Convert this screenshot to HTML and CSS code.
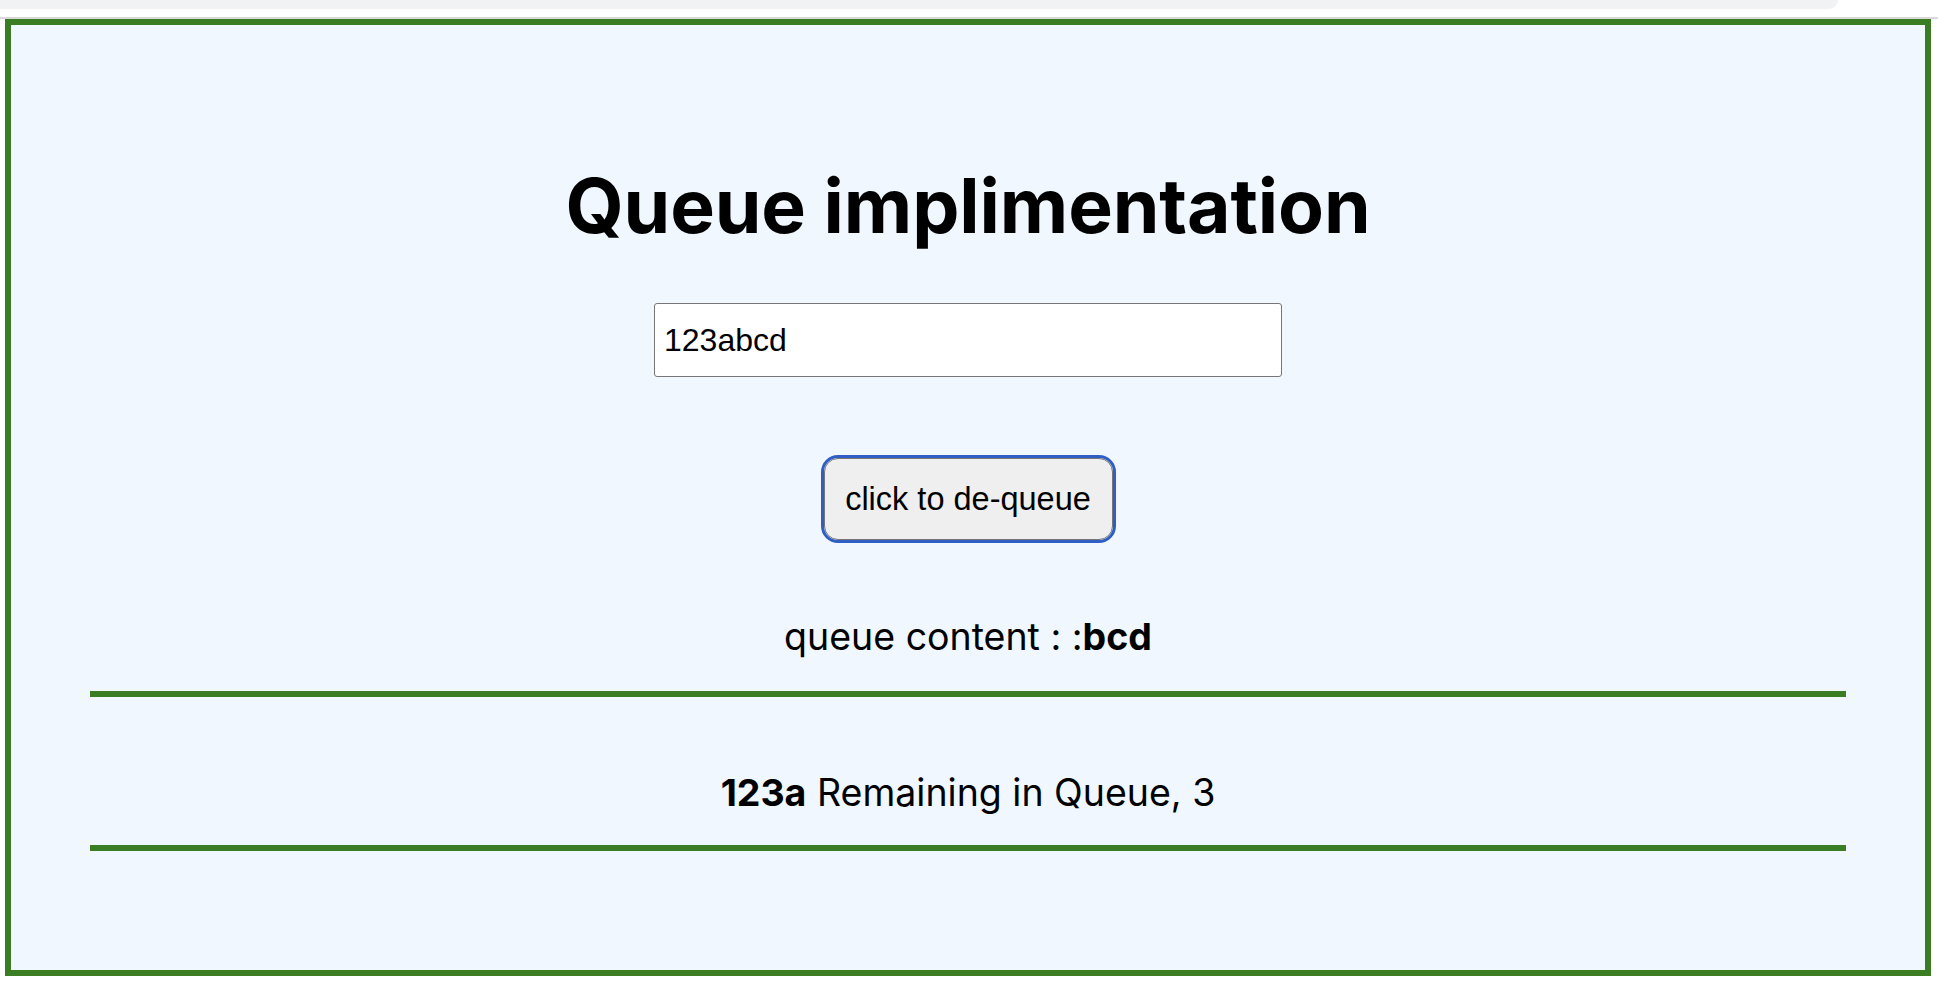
FILE: index.html
```html
<!DOCTYPE html>
<html lang="en">
<head>
<meta charset="utf-8">
<title>Queue implimentation</title>
<link rel="stylesheet" href="styles.css">
</head>
<body>
<div class="topbar"><div class="tab-strip"></div></div>
<div class="divider"></div>
<main class="frame">
  <h1 class="title">Queue implimentation</h1>
  <input class="queue-input" type="text" value="123abcd">
  <button class="dequeue-btn" type="button">click to de-queue</button>
  <p class="content-line">queue content : :<b>bcd</b></p>
  <hr class="rule">
  <p class="result-line"><b>123a</b> Remaining in Queue, 3</p>
  <hr class="rule">
</main>
</body>
</html>
```
FILE: styles.css
```css
html, body {
  margin: 0;
  padding: 0;
  background: #ffffff;
}
body {
  font-family: "Inter", "Liberation Sans", sans-serif;
  color: #000;
}
.topbar {
  height: 17px;
  background: #ffffff;
}
.tab-strip {
  width: 1838px;
  height: 9px;
  background: #f1f2f4;
  border-bottom-right-radius: 12px;
}
.divider {
  height: 2px;
  background: #d9d9d9;
}
.frame {
  box-sizing: border-box;
  margin: 0 7px 0 5px;
  height: 957px;
  border: 6px solid #3a7d22;
  background: #f0f7fe;
  display: flex;
  flex-direction: column;
  align-items: center;
}
.title {
  margin: 143px 0 0;
  font-size: 75px;
  line-height: 75px;
  font-weight: 700;
  letter-spacing: -0.1px;
}
.queue-input {
  box-sizing: border-box;
  margin-top: 60px;
  width: 628px;
  height: 74px;
  padding: 0 9px;
  border: 1px solid #767676;
  border-radius: 3px;
  background: #fff;
  font-family: "Liberation Sans", Arial, sans-serif;
  font-size: 32px;
  color: #000;
}
.dequeue-btn {
  box-sizing: border-box;
  margin-top: 81px;
  width: 289px;
  height: 82px;
  border: 1px solid #767676;
  border-radius: 14px;
  background: #efefef;
  outline: 3px solid #2f5fc4;
  font-family: "Liberation Sans", Arial, sans-serif;
  font-size: 32.5px;
  color: #000;
  padding: 0;
}
.content-line,
.result-line {
  margin: 0;
  font-size: 37.5px;
  line-height: 36px;
}
.content-line {
  margin-top: 79px;
}
.result-line {
  margin-top: 78px;
}
.rule {
  box-sizing: border-box;
  align-self: stretch;
  margin: 36px 79px 0;
  height: 6px;
  border: 0;
  background: #3a7d22;
}
.result-line + .rule {
  margin-top: 34px;
}
```
